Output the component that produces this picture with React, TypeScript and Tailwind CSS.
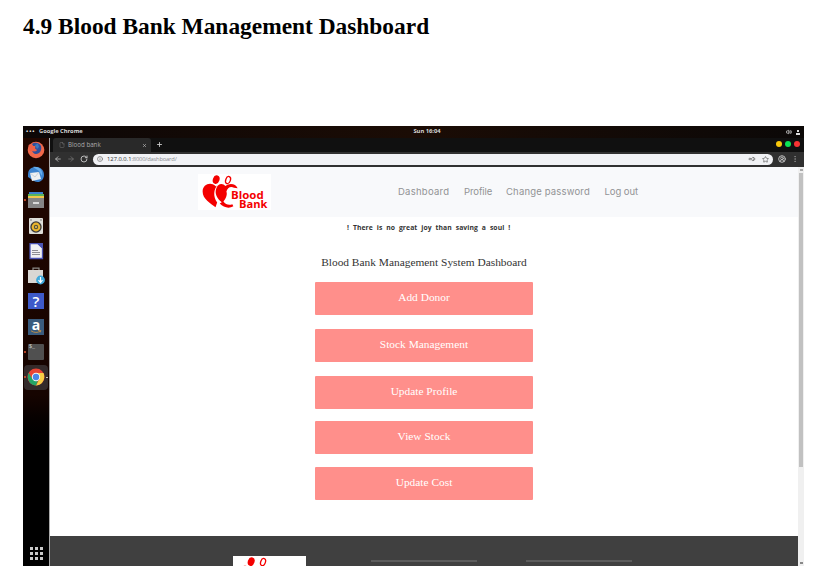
import React from "react";
import { ArrowLeft, ArrowRight, RotateCw, Info, File, X, Plus, Star, KeyRound, CircleUserRound, EllipsisVertical, Volume2 } from "lucide-react";

function Logo({ wordmark = true }: { wordmark?: boolean }) {
  return (
    <svg viewBox="24 25 221 107" className="block h-[36px] w-[73px] shrink-0 overflow-visible bg-white" fill="#f40000" preserveAspectRatio="none">
      <ellipse cx="79" cy="42" rx="10" ry="13" transform="rotate(20 79 42)" />
      <ellipse cx="115" cy="43" rx="7" ry="11" transform="rotate(20 115 43)" fill="none" stroke="#f40000" strokeWidth="4" />
      <path d="M77 124C62 112 38 100 38 77C38 56 62 47 77 61C79 63 81 60 84 57C71 70 69 92 82 110Z" />
      <path d="M96 109C81 98 74 83 79 69C83 53 99 50 107 61C119 50 139 54 144 67L133 66C122 60 113 67 110 77C114 88 107 99 101 107C108 116 117 119 128 115L131 121C118 129 101 125 90 113Z" />
      {wordmark && (
        <g fontFamily="'Open Sans', sans-serif" fontWeight="700">
          <text x="124" y="98" fontSize="34" textLength="99" lengthAdjust="spacingAndGlyphs">Blood</text>
          <text x="148" y="127" fontSize="34" textLength="86" lengthAdjust="spacingAndGlyphs">Bank</text>
        </g>
      )}
    </svg>
  );
}

const Firefox = () => (
  <svg viewBox="0 0 18 18" className="size-[18px]">
    <circle cx="9" cy="9" r="8.3" fill="#f2694a" />
    <path d="M5 3C7 1 12 1 14 5C15 9 13 13 9 13C7 13 5 11 5 9L7 7Z" fill="#30509b" />
    <path d="M1.5 4L4 3L6 5L8.5 5L8 7.5L10 9C9 11 6 10.5 5 10L2 10Z" fill="#ed6047" />
    <path d="M8 4L11 2.5L12 6L10 8Z" fill="#3b79bd" />
  </svg>
);
const Thunderbird = () => (
  <svg viewBox="0 0 18 18" className="size-[18px]">
    <path d="M3 3C8-1 17 1 17 9C17 14 12 18 7 15L1 11C1 7 1 5 3 3Z" fill="#3c83cf" />
    <path d="M6 1C13 0 16 5 15 10L12 5Z" fill="#67adeb" />
    <path d="M3 7L12 6L14 13L5 15Z" fill="#eef0f2" />
    <path d="M3 7L8 11L12 6" fill="none" stroke="#bbc5ce" strokeWidth=".7" />
  </svg>
);
const Files = () => (
  <svg viewBox="0 0 18 18" className="size-[18px]">
    <path d="M2 1H16V4H2Z" fill="#3c82cf" /><path d="M1 3H17V5H1Z" fill="#5bb45a" /><path d="M1 5H17V8H1Z" fill="#f1c84b" />
    <path d="M1 7H17V17H1Z" fill="#858585" /><path d="M6 11.2H12V12.8H6Z" fill="#eee" />
  </svg>
);
const Rhythmbox = () => (
  <svg viewBox="0 0 18 18" className="size-[18px]">
    <rect x="2" y="1" width="14" height="16" rx="1" fill="#deded8" />
    <circle cx="4" cy="3" r=".8" fill="#777" /><circle cx="14" cy="3" r=".8" fill="#777" />
    <circle cx="9" cy="10" r="5.7" fill="#39383a" /><circle cx="9" cy="10" r="4.4" fill="#eab52c" />
    <circle cx="9" cy="10" r="2.2" fill="#57533c" /><circle cx="9" cy="10" r="1" fill="#f0ca5a" />
  </svg>
);
const Writer = () => (
  <svg viewBox="0 0 18 18" className="size-[18px]">
    <path d="M3 1.7H11L15.5 6V16.5H3Z" fill="#f2f2f3" stroke="#4b55b4" strokeWidth="1.3" />
    <path d="M10 1L16 7V1Z" fill="#4b55b4" /><path d="M5 8.5H11M5 10.5H13M5 12.5H13" stroke="#8e8e94" strokeWidth="1" />
  </svg>
);
const Software = () => (
  <svg viewBox="0 0 18 18" className="size-[18px]">
    <path d="M6 3V1.2H12V3" fill="none" stroke="#8c8a87" strokeWidth="1.2" /><path d="M1 3H16V16H1Z" fill="#d9d7d4" />
    <circle cx="13.5" cy="13" r="4.4" fill="#3fa9dc" /><path d="M13.5 10V15M11.5 13L13.5 15.5L15.5 13" fill="none" stroke="white" strokeWidth="1.2" />
  </svg>
);
const Chrome = () => (
  <svg viewBox="0 0 18 18" className="size-[18px]">
    <circle cx="9" cy="9" r="8.5" fill="#e94435" />
    <path d="M9 5H16.5C19 11 15 17.5 9 17.5L12.5 11Z" fill="#f9cf45" />
    <path d="M1.6 4.8L5.5 11L9 13L11 12.5L9 17.5C3 17.5-1 11 1.6 4.8Z" fill="#25a566" />
    <circle cx="9" cy="9" r="4.2" fill="#f3f6fa" /><circle cx="9" cy="9" r="3.2" fill="#4a87e8" />
  </svg>
);

function DockItem({ children, dot = false, active = false }: { children: React.ReactNode; dot?: boolean; active?: boolean }) {
  return (
    <div className="flex h-[25.3px] w-full shrink-0 items-center">
      <span className={`z-10 ml-px size-[2px] shrink-0 rounded-full ${dot ? "bg-[#e5532e]" : ""}`} />
      <div className={`-ml-[2px] flex h-[25px] w-[24px] shrink-0 items-center justify-center rounded-sm ${active ? "bg-[#342b2b]" : ""}`}>{children}</div>
      {active && <span className="z-10 -ml-[2px] size-[1.5px] shrink-0 rounded-full bg-[#ddd]" />}
    </div>
  );
}

function Dock() {
  return (
    <aside className="flex w-[26px] shrink-0 flex-col bg-linear-to-b from-[#210700] via-[#160400] via-60% to-black to-75%">
      <div className="-mt-px flex h-[254px] shrink-0 flex-col">
        <DockItem><Firefox /></DockItem>
        <DockItem><Thunderbird /></DockItem>
        <DockItem dot><Files /></DockItem>
        <DockItem><Rhythmbox /></DockItem>
        <DockItem><Writer /></DockItem>
        <DockItem><Software /></DockItem>
        <DockItem><div className="flex size-4 items-center justify-center bg-[#3e5ac9] font-['Open_Sans',sans-serif] text-[15px] font-semibold leading-none text-white">?</div></DockItem>
        <DockItem>
          <div className="flex size-4 flex-col items-center bg-[#395b7d] font-['Open_Sans',sans-serif] text-[14px] font-bold leading-[11px] text-white">a
            <svg viewBox="0 0 12 4" className="h-[4px] w-[12px]"><path d="M1 .8Q6 4 10.5 1M8 .5L11 .7L10 2.5" fill="none" stroke="#b68b4c" strokeWidth="1" /></svg>
          </div>
        </DockItem>
        <DockItem dot><div className="size-4 rounded-[1px] bg-[#505050] pl-px font-['Liberation_Mono',monospace] text-[5px] leading-[7px] text-[#ddd]">$_</div></DockItem>
        <DockItem dot active><Chrome /></DockItem>
      </div>
      <div className="mx-auto mt-auto mb-[6px] grid grid-cols-3 gap-[2px]">
        {Array.from({ length: 9 }, (_, i) => <span key={i} className="size-[3px] bg-[#c9c9c9]" />)}
      </div>
    </aside>
  );
}

function BrowserChrome() {
  return (
    <>
      <div className="flex h-[14px] items-end bg-[#101010]">
        <div className="ml-[3px] flex h-[14px] w-[98px] items-center rounded-t-[3px] bg-[#292929] pr-[4px] pl-[6px]">
          <File className="size-[6px] text-[#777]" strokeWidth={2} />
          <span className="ml-[3px] text-[6.2px] leading-none text-[#aaa]">Blood bank</span>
          <X className="ml-auto size-[5px] text-[#bbb]" strokeWidth={3} />
        </div>
        <Plus className="mb-[4px] ml-[5px] size-[7px] text-[#ccc]" strokeWidth={3} />
        <div className="mr-[4px] mb-[5px] ml-auto flex gap-[3px]">
          <span className="size-[6px] rounded-full bg-[#f9c80b]" />
          <span className="size-[6px] rounded-full bg-[#0be355]" />
          <span className="size-[6px] rounded-full bg-[#f83333]" />
        </div>
      </div>
      <div className="flex h-[15px] shrink-0 items-center bg-[#303030] pr-[5px] pb-px pl-[4px] text-[#bbb]">
        <ArrowLeft className="size-[8px]" strokeWidth={2.5} />
        <ArrowRight className="ml-[5px] size-[8px] text-[#707070]" strokeWidth={2.5} />
        <RotateCw className="ml-[5px] size-[8px]" strokeWidth={3} />
        <div className="ml-[5px] flex h-[11px] flex-1 items-center rounded-full bg-[#f1f2f5] pr-[4px] pl-[4px] text-[#666]">
          <Info className="size-[6px]" strokeWidth={2.5} />
          <span className="ml-[4px] pt-px text-[5.8px] leading-none text-[#333]">127.0.0.1<span className="tracking-[-0.2px] text-[#8a8d91]">:8000/dashboard/</span></span>
          <KeyRound className="ml-auto size-[6px] rotate-45" strokeWidth={3} />
          <Star className="ml-[7px] size-[7px]" strokeWidth={2.5} />
        </div>
        <CircleUserRound className="ml-[5px] size-[8px]" strokeWidth={3} />
        <EllipsisVertical className="ml-[5px] size-[8px] text-[#888]" strokeWidth={2.5} />
      </div>
    </>
  );
}

const buttonStyle = "flex h-[33px] w-[218px] shrink-0 items-center justify-center rounded-[1px] bg-[#ff8f8b] pb-[2px] text-[11.4px] text-white";

function Page() {
  return (
    <div className="flex min-h-0 flex-1">
      <main className="flex min-w-0 flex-1 flex-col bg-white">
        <header className="flex h-[50px] shrink-0 items-start bg-[#f8f9fb] pt-[7px] pl-[148px]">
          <Logo />
          <nav className="mt-[11px] ml-[127px] flex items-center font-['Inter',sans-serif] text-[9.5px] leading-[14px] text-[#929395]">
            <a className="w-[66px] tracking-[0.25px]">Dashboard</a>
            <a className="w-[42px] tracking-[-0.1px]">Profile</a>
            <a className="w-[98.5px] tracking-[0.17px]">Change password</a>
            <a className="tracking-[-0.05px]">Log out</a>
          </nav>
        </header>
        <p className="mt-[6px] ml-[297px] text-[6.8px] font-bold leading-[10px] tracking-[0.09px] whitespace-pre text-[#333] [word-spacing:2px]">! There is no great joy than saving a soul !</p>
        <section className="ml-[265px] flex w-[218px] flex-col font-['Liberation_Serif',serif]">
          <h2 className="mt-[21px] h-[16px] text-center text-[11.4px] leading-[16px] whitespace-nowrap text-[#333]">Blood Bank Management System Dashboard</h2>
          <button className={`${buttonStyle} mt-[12px]`}>Add Donor</button>
          <button className={`${buttonStyle} mt-[14px]`}>Stock Management</button>
          <button className={`${buttonStyle} mt-[14px]`}>Update Profile</button>
          <button className={`${buttonStyle} mt-[12px]`}>View Stock</button>
          <button className={`${buttonStyle} mt-[13px]`}>Update Cost</button>
        </section>
        <footer className="mt-auto flex h-[30px] shrink-0 overflow-hidden bg-[#404040] pt-[20px] pl-[183px]">
          <Logo wordmark={false} />
          <span className="mt-[4px] ml-[65px] h-[2px] w-[106px] bg-[#5c5c5c]" />
          <span className="mt-[4px] ml-[49px] h-[2px] w-[106px] bg-[#5c5c5c]" />
        </footer>
      </main>
      <div className="flex w-[6px] flex-col items-center bg-[#f0f0f0]">
        <span className="mt-[2px] h-[2px] w-[3px] bg-[#aaa]" />
        <span className="mt-[2px] h-[294px] w-[4px] bg-[#c1c1c1]" />
        <span className="mt-auto mb-[2px] h-[2px] w-[3px] bg-[#888]" />
      </div>
    </div>
  );
}

export default function App() {
  return (
    <div className="h-[577px] w-[817px] overflow-hidden bg-white pl-[23px] font-['Open_Sans',sans-serif]">
      <h1 className="h-[126px] pt-[11px] font-['Liberation_Serif',serif] text-[23.4px] font-bold leading-[30px] text-black">4.9 Blood Bank Management Dashboard</h1>
      <div className="flex h-[440px] w-[781px] flex-col">
        <div className="grid h-[12px] shrink-0 grid-cols-3 items-center bg-linear-to-r from-[#0c0706] via-[#1b0c05] to-[#0b0807] px-[3px] text-[5.8px] font-bold leading-none text-[#d8d8d8]">
          <div className="flex items-center"><span className="w-[13px] tracking-[1px]">•••</span><span className="tracking-[-0.04px]">Google Chrome</span></div>
          <span className="pl-[27px] text-center">Sun 16:04</span>
          <div className="flex items-center justify-end gap-[4px] pr-px">
            <Volume2 className="size-[6px]" strokeWidth={3} />
            <span className="flex h-[5px] w-[4px] flex-col justify-between"><span className="mx-auto h-[2px] w-[2px] bg-[#ddd]" /><span className="h-[2px] bg-[#ddd]" /></span>
          </div>
        </div>
        <div className="flex min-h-0 flex-1">
          <Dock />
          <div className="flex min-w-0 flex-1 flex-col border-l border-[#aaa]">
            <BrowserChrome />
            <Page />
          </div>
        </div>
      </div>
    </div>
  );
}
